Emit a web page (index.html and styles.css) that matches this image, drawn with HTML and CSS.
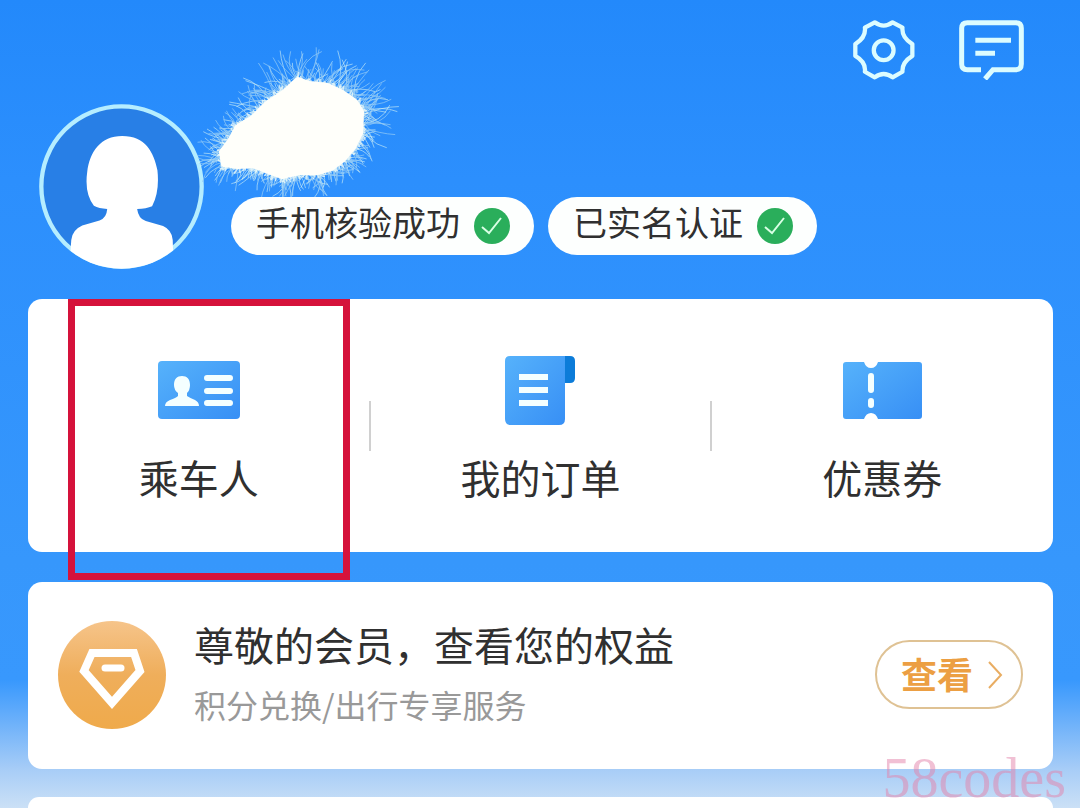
FILE: index.html
```html
<!DOCTYPE html>
<html lang="zh-CN">
<head>
<meta charset="utf-8">
<meta name="viewport" content="width=device-width, initial-scale=1">
<title>我的</title>
<link rel="stylesheet" href="styles.css">
</head>
<body>
<header class="topbar">
  <button class="icon-button" type="button" aria-label="设置">
    <svg width="62" height="60" viewBox="70 59 186 182" fill="none" stroke="#dcfcff" stroke-width="13" stroke-linejoin="round">
      <path d="M135 66Q162 86 189 66L219 82Q216 112 249 132V168Q217 188 219 216L189 233Q162 213 135 233L105 216Q109 187 76 168V132Q109 112 105 82Z"/>
      <circle cx="162" cy="151" r="30"/>
    </svg>
  </button>
  <button class="icon-button" type="button" aria-label="消息">
    <svg width="65" height="60" viewBox="387 60 195 180" fill="none" stroke="#dcfcff" stroke-width="15">
      <path d="M453 209H412Q395 209 395 192V85Q395 68 412 68H557Q574 68 574 85V192Q574 209 557 209H489L465 237M436 121H543M436 160H495"/>
    </svg>
  </button>
</header>

<main class="page">
  <section class="profile">
    <svg class="avatar" viewBox="55 161 496 496" role="img" aria-label="头像">
      <defs><clipPath id="face"><circle cx="303" cy="409" r="247"/></clipPath></defs>
      <circle cx="303" cy="409" r="241" fill="#287fe6" stroke="#b5edff" stroke-width="13"/>
      <path clip-path="url(#face)" fill="#fff" d="M305 257C375 257 400 305 411 360Q418 425 395 468Q378 475 350 477Q354 507 376 513L428 528Q455 540 457 570L460 670H145L152 570Q154 540 185 526L237 511Q258 505 260 477Q235 475 220 467Q191 430 200 365C207 305 240 257 305 257Z"/>
    </svg>
    <svg class="splash" id="splash" width="230" height="170" viewBox="190 40 230 170" aria-hidden="true">
      <path fill="#fffffa" stroke="#fffffa" stroke-width="6" stroke-linejoin="round" d="M222 152L231 140 238 127 253 118 267 104 285 92 298 80 309 84 327 86 342 93 355 102 361 112 360 133 353 147 343 159 331 168 318 172 299 172 282 176 266 170 253 165 238 166 224 164Z"/>
    </svg>
    <div class="badges">
      <span class="badge"><span class="badge-label">手机核验成功</span>
        <svg width="36" height="36" viewBox="0 0 36 36"><circle cx="18" cy="18" r="18" fill="#2aae5b"/><path d="M8 19l7 6 12-15" fill="none" stroke="#d9ffe5" stroke-width="2"/></svg>
      </span>
      <span class="badge"><span class="badge-label">已实名认证</span>
        <svg width="36" height="36" viewBox="0 0 36 36"><circle cx="18" cy="18" r="18" fill="#2aae5b"/><path d="M8 19l7 6 12-15" fill="none" stroke="#d9ffe5" stroke-width="2"/></svg>
      </span>
    </div>
  </section>

  <nav class="card shortcuts">
    <a class="shortcut highlighted" href="#">
      <svg width="84" height="72" viewBox="0 0 84 72">
        <defs><linearGradient id="blue" x1="0" y1="0" x2="1" y2="1"><stop stop-color="#56b2fb"/><stop offset="1" stop-color="#378ff5"/></linearGradient></defs>
        <rect x="1" y="7" width="82" height="58" rx="4" fill="url(#blue)"/>
        <path fill="#f4ffff" d="M25 22C30 22 33 25 33 31Q33 36 30 39V42Q33 44 38 46Q42 48 42 52H8Q8 48 13 46Q19 44 21 42V39Q17 36 17 31C17 25 20 22 25 22Z"/>
        <path d="M50 24H73M50 37H73M50 49H73" stroke="#f4ffff" stroke-width="6" stroke-linecap="round"/>
      </svg>
      <span>乘车人</span>
    </a>
    <a class="shortcut" href="#">
      <svg width="84" height="72" viewBox="0 0 84 72">
        <path fill="#0c7cd9" d="M65 2H72Q77 2 77 7V24Q77 29 72 29H65Z"/>
        <path fill="url(#blue)" d="M12 2H67V65Q67 71 61 71H13Q7 71 7 65V7Q7 2 12 2Z"/>
        <path d="M21 23H50M21 36H50M21 49H50" stroke="#f4ffff" stroke-width="6"/>
      </svg>
      <span>我的订单</span>
    </a>
    <a class="shortcut" href="#">
      <svg width="84" height="72" viewBox="0 0 84 72">
        <path fill="url(#blue)" d="M6 8H24Q26 14 31 14T38 8H79Q82 8 82 11V62Q82 65 79 65H38Q36 59 31 59T24 65H6Q3 65 3 62V11Q3 8 6 8Z"/>
        <path d="M31 22V36M31 47V51" stroke="#f4ffff" stroke-width="6" stroke-linecap="round"/>
      </svg>
      <span>优惠券</span>
    </a>
  </nav>

  <section class="card member">
    <svg class="medal" viewBox="0 0 108 108">
      <defs><linearGradient id="gold" x1="0" y1="0" x2="0" y2="1"><stop stop-color="#f6c48a"/><stop offset=".5" stop-color="#efae5b"/><stop offset="1" stop-color="#efaa4b"/></linearGradient></defs>
      <circle cx="54" cy="54" r="54" fill="url(#gold)"/>
      <path d="M34 32H76L82 50 54 82 26 50Z" fill="none" stroke="#fff" stroke-width="8"/>
      <path d="M47 47H63" stroke="#fff" stroke-width="7" stroke-linecap="round"/>
    </svg>
    <div class="member-text">
      <h2>尊敬的会员，查看您的权益</h2>
      <p>积分兑换/出行专享服务</p>
    </div>
    <button class="view-button" type="button"><span class="view-label">查看</span>
      <svg width="16" height="30" viewBox="0 0 16 30" fill="none" stroke="#e9ad62" stroke-width="2"><path d="M2 2L14 15 2 28"/></svg>
    </button>
  </section>

  <section class="card next-card"></section>
</main>
<div class="watermark">58codes</div>
<script src="splash.js"></script>
</body>
</html>
```
FILE: styles.css
```css
* {
  box-sizing: border-box;
}

body {
  position: relative;
  display: flex;
  flex-direction: column;
  min-height: 100vh;
  margin: 0;
  overflow-x: hidden;
  background: linear-gradient(#2389fb 0, #2c8ffd 180px, #3697fc 560px, #3898fd 680px, #a8cdf7 770px, #cbe0f6 808px);
  color: #303030;
  font-family: "Noto Sans CJK SC", sans-serif;
}

button {
  font-family: inherit;
  cursor: pointer;
}

svg {
  flex: none;
}

.topbar {
  display: flex;
  justify-content: flex-end;
  gap: 44px;
  padding: 20px 56px 0;
}

.icon-button {
  display: flex;
  padding: 0;
  border: 0;
  background: none;
}

.page {
  display: flex;
  flex: 1;
  flex-direction: column;
  padding: 24px 27px 0 28px;
}

.profile {
  position: relative;
  display: flex;
  align-items: flex-end;
  gap: 27px;
  margin: 0 0 30px 11px;
}

.avatar {
  width: 165px;
  height: 165px;
}

.splash {
  position: absolute;
  top: -64px;
  left: 151px;
}

.badges {
  position: relative;
  display: flex;
  flex-wrap: wrap;
  gap: 14px;
  padding-bottom: 14px;
}

.badge {
  display: flex;
  align-items: center;
  gap: 14px;
  height: 58px;
  padding: 0 24px 0 25px;
  border-radius: 29px;
  background: #fdfffe;
  font-size: 34px;
  line-height: 48px;
}

.badge-label {
  padding-bottom: 8px;
}

.card {
  border-radius: 14px;
  background: #fff;
}

.shortcuts {
  display: grid;
  grid-template-columns: repeat(3, 1fr);
  margin-bottom: 30px;
}

.shortcut {
  position: relative;
  display: flex;
  flex-direction: column;
  align-items: center;
  gap: 23px;
  padding: 55px 0 47px;
  color: inherit;
  font-size: 40px;
  line-height: 56px;
  text-decoration: none;
}

.shortcut + .shortcut::before {
  position: absolute;
  top: 102px;
  left: -1px;
  width: 2px;
  height: 50px;
  background: #d0d0d0;
  content: "";
}

.highlighted::after {
  position: absolute;
  inset: 0 20px -28px 40px;
  border: 7px solid #d5123b;
  content: "";
}

.member {
  display: flex;
  align-items: center;
  gap: 28px;
  margin-bottom: 28px;
  padding: 34px 30px 36px;
}

.medal {
  width: 108px;
  height: 108px;
}

.member-text {
  flex: 1;
  padding-bottom: 5px;
}

.member-text h2 {
  margin: 0 0 8px;
  font-size: 40px;
  font-weight: 400;
  line-height: 56px;
}

.member-text p {
  margin: 0;
  color: #999;
  font-size: 32px;
  line-height: 48px;
}

.view-button {
  display: flex;
  align-items: center;
  gap: 14px;
  height: 69px;
  padding: 0 18px 0 24px;
  border: 2px solid #dfc294;
  border-radius: 35px;
  background: #fff;
  color: #ec9f43;
  font-size: 36px;
  font-weight: 700;
}

.view-label {
  padding-bottom: 4px;
}

.next-card {
  flex: 1;
  border-radius: 14px 14px 0 0;
}

.watermark {
  position: absolute;
  right: 14px;
  bottom: 0;
  color: rgba(228, 130, 170, 0.5);
  font-family: "Liberation Serif", serif;
  font-size: 56px;
  line-height: 60px;
}
```
FILE: splash.js
```javascript
// Draws the fine hairs around the edge of the white splash.
const splash = document.getElementById("splash");
const outline = splash.querySelector("path");
const total = outline.getTotalLength();
let seed = 17;
function random() {
  seed = (seed * 16807) % 2147483647;
  return seed / 2147483647;
}
const hairs = [[], [], []];
for (let i = 0; i < 1100; i++) {
  const p = outline.getPointAtLength(random() * total);
  const angle = Math.atan2(p.y - 130, p.x - 300) + (random() - 0.5) * 2.4;
  const reach = 3 + Math.pow(random(), 3) * (p.x > 260 && p.y < 130 ? 38 : 26);
  const bend = angle + (random() - 0.5) * 1.2;
  const mx = p.x + Math.cos(bend) * reach * 0.6;
  const my = p.y + Math.sin(bend) * reach * 0.6;
  const x = p.x + Math.cos(angle) * reach;
  const y = p.y + Math.sin(angle) * reach;
  hairs[reach < 9 ? 2 : i % 2].push(`M${p.x} ${p.y}Q${mx} ${my} ${x} ${y}`);
}
const looks = [["#d5f3f5", 0.8], ["#8fc8f5", 1], ["#f6fff8", 1.4]];
looks.forEach(([color, width], i) => {
  const path = document.createElementNS("http://www.w3.org/2000/svg", "path");
  path.setAttribute("d", hairs[i].join(""));
  path.setAttribute("fill", "none");
  path.setAttribute("stroke", color);
  path.setAttribute("stroke-width", width);
  path.setAttribute("opacity", "0.75");
  splash.insertBefore(path, outline);
});
```
